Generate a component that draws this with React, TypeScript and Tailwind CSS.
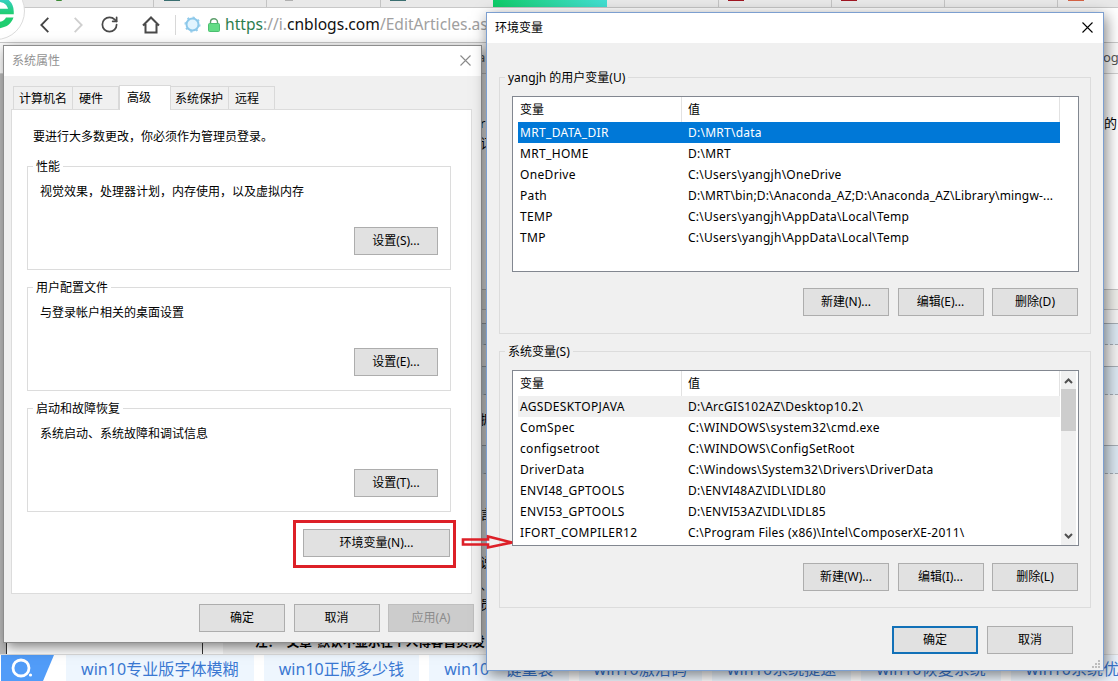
import { RotateCw } from "lucide-react"
import { clsx } from "clsx"
import type { ReactNode } from "react"

type Variable = { name: string; value: string }

const USER_VARS: Variable[] = [
  { name: "MRT_DATA_DIR", value: "D:\\MRT\\data" },
  { name: "MRT_HOME", value: "D:\\MRT" },
  { name: "OneDrive", value: "C:\\Users\\yangjh\\OneDrive" },
  { name: "Path", value: "D:\\MRT\\bin;D:\\Anaconda_AZ;D:\\Anaconda_AZ\\Library\\mingw-..." },
  { name: "TEMP", value: "C:\\Users\\yangjh\\AppData\\Local\\Temp" },
  { name: "TMP", value: "C:\\Users\\yangjh\\AppData\\Local\\Temp" },
]

const SYSTEM_VARS: Variable[] = [
  { name: "AGSDESKTOPJAVA", value: "D:\\ArcGIS102AZ\\Desktop10.2\\" },
  { name: "ComSpec", value: "C:\\WINDOWS\\system32\\cmd.exe" },
  { name: "configsetroot", value: "C:\\WINDOWS\\ConfigSetRoot" },
  { name: "DriverData", value: "C:\\Windows\\System32\\Drivers\\DriverData" },
  { name: "ENVI48_GPTOOLS", value: "D:\\ENVI48AZ\\IDL\\IDL80" },
  { name: "ENVI53_GPTOOLS", value: "D:\\ENVI53AZ\\IDL\\IDL85" },
  { name: "IFORT_COMPILER12", value: "C:\\Program Files (x86)\\Intel\\ComposerXE-2011\\" },
]

const SUGGESTIONS = [
  "win10专业版字体模糊",
  "win10正版多少钱",
  "win10一键重装",
  "win10激活码",
  "win10系统提速",
  "win10恢复系统",
  "win10系统优化",
]

type ButtonProps = {
  children: ReactNode
  className?: string
  variant?: "normal" | "default" | "disabled"
}

function Button({ children, className, variant = "normal" }: ButtonProps) {
  return (
    <button
      className={clsx(
        "flex h-7 shrink-0 items-center justify-center whitespace-nowrap",
        variant === "normal" && "border border-[#adadad] bg-[#e1e1e1]",
        variant === "default" && "border-2 border-[#1271b8] bg-[#e1e1e1]",
        variant === "disabled" && "border border-[#bfbfbf] bg-[#cccccc] text-[#8b8b8b]",
        className ?? "w-[86px]"
      )}
    >
      {children}
    </button>
  )
}

function CloseIcon({ className }: { className: string }) {
  return (
    <svg className={className} width="11" height="11" viewBox="0 0 11 11" fill="none" stroke="currentColor">
      <path d="M0.5 0.5L10.5 10.5M10.5 0.5L0.5 10.5" strokeWidth="1.1" />
    </svg>
  )
}

/* Browser behind the dialogs */

function Browser() {
  const band = "border-t border-b border-t-[#a5adb4] border-b-[#a5adb4] bg-[#dce8f2] [border-bottom-style:dashed]"
  return (
    <div className="flex h-full flex-col bg-white">
      <div className="flex h-2 shrink-0 border-b border-[#c8c8c8] bg-[#e9e9e9]">
        <div className="flex w-[154px] border-r border-[#c4c4c4] pl-[56px]">
          <span className="h-px w-1.5 rounded-b bg-[#3b8a35]" />
        </div>
        <div className="flex w-[113px] border-r border-[#c4c4c4] pl-2.5">
          <span className="h-px w-4 bg-[#3a6e70]" />
        </div>
        <div className="flex w-[114px] border-r border-[#c4c4c4] pl-[18px]">
          <span className="h-px w-2 bg-[#b0b0b0]" />
        </div>
        <div className="flex w-[112px] pl-[9px]">
          <span className="h-px w-4 bg-[#3a6e70]" />
        </div>
        <div className="w-[114px] bg-gradient-to-r from-[#0ccd68] to-[#43dfd3]" />
        <div className="w-[112px] border-r border-[#c4c4c4]" />
        <div className="flex w-[113px] border-r border-[#c4c4c4] pl-[9px]">
          <span className="h-px w-4 bg-[#a01622]" />
        </div>
        <div className="flex w-[113px] border-r border-[#c4c4c4] pl-[9px]">
          <span className="h-px w-4 bg-[#a01622]" />
        </div>
        <div className="flex w-[113px] border-r border-[#c4c4c4]" />
        <div className="flex flex-1 pl-2.5">
          <span className="h-px w-4 bg-[#d46245]" />
        </div>
      </div>

      <div className="flex h-[35px] shrink-0 items-center border-b border-[#c9c9c9] pb-px pl-[40px]">
        <svg width="9" height="16" viewBox="0 0 9 16" fill="none" stroke="#444" strokeWidth="1.8">
          <path d="M8.3 0.8L1.3 8L8.3 15.2" />
        </svg>
        <svg className="ml-[25px]" width="9" height="16" viewBox="0 0 9 16" fill="none" stroke="#cfcfcf" strokeWidth="1.8">
          <path d="M0.7 0.8L7.7 8L0.7 15.2" />
        </svg>
        <RotateCw className="ml-[17px] h-[19px] w-[19px] text-[#4a4a4a]" strokeWidth={2.2} />
        <svg className="ml-[23px]" width="18" height="18" viewBox="0 0 18 18" fill="none" stroke="#4a4a4a" strokeWidth="2">
          <path d="M1 9.5L9 1.5L17 9.5M3.5 8V16.5H14.5V8" />
        </svg>
        <span className="ml-[15px] h-5 w-px bg-[#d8d8d8]" />
        <svg className="ml-[8px]" width="17" height="17" viewBox="0 0 17 17" fill="none">
          <circle cx="8.5" cy="8.5" r="6" fill="#e2f4fe" stroke="#8cc8ea" strokeWidth="2" />
          <circle cx="8.5" cy="8.5" r="7.4" stroke="#8cc8ea" strokeWidth="1.2" strokeDasharray="2.2 3.6" />
        </svg>
        <svg className="ml-[7px]" width="12" height="14" viewBox="0 0 12 14" fill="none">
          <path d="M2.5 6V4a3.5 3.2 0 0 1 7 0v2" stroke="#5d9f6c" strokeWidth="1.4" />
          <rect x="0.5" y="5.5" width="11" height="8" rx="1" fill="#62dc85" stroke="#4cbf71" />
        </svg>
        <div className="ml-[5px] text-[15.6px] whitespace-nowrap text-[#a0a0a0]">
          <span className="text-[#2c7d4e]">https</span>
          ://i.<span className="text-[#111]">cnblogs.com</span>/EditArticles.as
        </div>
      </div>

      <div className="flex h-[31px] shrink-0 items-center justify-between border-b border-[#cfcfcf] bg-[#fafafa] text-[13px] text-[#555]">
        <span className="pl-[478px]">a</span>
        <span className="w-[15px]">og</span>
      </div>

      <div className="flex min-h-0 flex-1">
        <div className="w-[7px] border-r border-[#333] bg-[#b9b9b9]" />
        <div className="w-[196px] border-r border-[#333] bg-white" />
        <div className="w-5 bg-white" />
        <div className="flex flex-1 flex-col overflow-hidden bg-[#f2f2f2]">
          <div className="flex h-[215px] shrink-0 items-start justify-between bg-white pt-[39px] text-[13px] leading-5 text-black">
            <span className="pl-[257px]">
              r<br />订
            </span>
            <span className="w-[14px]">的</span>
          </div>
          <div className="h-[21px] shrink-0 border-y border-[#c4c4c4] bg-[#eeeeea]" />
          <div className="h-[13px] shrink-0 bg-[#f4f4f4]" />
          <div className={clsx(band, "h-[22px] shrink-0")} />
          <div className="h-[21px] shrink-0" />
          <div className={clsx(band, "h-[29px] shrink-0")} />
          <div className="flex h-[50px] shrink-0 items-center pl-[257px] text-[13px]">据</div>
          <div className={clsx(band, "h-[29px] shrink-0")} />
          <div className="flex h-[154px] shrink-0 flex-col pt-[30px] pl-[257px] text-[13px] leading-[20px]">
            <span>言</span>
            <span className="mt-[28px]">说</span>
            <span className="mt-[2px]">、</span>
            <span>员</span>
          </div>
          <div className="h-[26px] shrink-0 pt-px pl-[32px] text-[12.6px] leading-[26px] font-bold whitespace-nowrap text-black">
            注：&nbsp; 文章“默认不显示在个人博客首页,发
          </div>
        </div>
      </div>

      <div className="flex h-[27px] shrink-0 gap-2.5 overflow-hidden border-t border-[#dcdcdc] bg-white">
        <svg className="-mr-[2px] ml-px shrink-0" width="57" height="26" viewBox="0 0 57 26">
          <path d="M0 0H53L42 26H0Z" fill="#519cf8" />
          <circle cx="20" cy="13" r="8" fill="none" stroke="#fff" strokeWidth="2.8" />
          <circle cx="29.5" cy="20" r="1.6" fill="#fff" />
        </svg>
        {SUGGESTIONS.map((text) => (
          <span
            key={text}
            className="flex h-[26px] shrink-0 items-center bg-[#eef6fe] px-[15px] pt-0.5 text-[16px] tracking-[0.06px] whitespace-nowrap text-[#3a78d2]"
          >
            {text}
          </span>
        ))}
      </div>
    </div>
  )
}

/* System properties */

function Section({ title, text, button }: { title: string; text: string; button: string }) {
  return (
    <fieldset className="h-[112px] w-[424px] border border-[#dcdcdc]">
      <legend className="ml-[5px] h-[17px] px-[3px] pt-px leading-4">{title}</legend>
      <p className="pt-[9px] pl-3 leading-4">{text}</p>
      <div className="mt-[27px] flex justify-end pr-3">
        <Button className="w-[84px]">{button}</Button>
      </div>
    </fieldset>
  )
}

function SystemProperties() {
  const tab = "flex h-[23px] items-center border-t border-r border-[#d9d9d9] bg-[#f0f0f0] pt-0.5"
  return (
    <div className="absolute top-[45px] left-[3px] flex h-[598px] w-[479px] flex-col border border-[#8d8d8d] bg-[#f0f0f0] text-black shadow-[3px_4px_12px_rgba(0,0,0,0.5)]">
      <div className="flex h-[30px] shrink-0 items-center justify-between bg-white pr-[10px] pl-2 text-[#929292]">
        <span>系统属性</span>
        <CloseIcon className="-mt-px text-[#8a8a8a]" />
      </div>
      <div className="mt-[9px] ml-[9px] flex h-[24px] items-end">
        <div className={clsx(tab, "w-[60px] border-l pl-[5px]")}>计算机名</div>
        <div className={clsx(tab, "w-[46px] pl-[6px]")}>硬件</div>
        <div className="z-10 -mb-px flex h-[25px] w-[52px] items-center border-x border-t border-[#d9d9d9] bg-white pb-px pl-[7px]">
          高级
        </div>
        <div className={clsx(tab, "w-[58px] pl-[4px]")}>系统保护</div>
        <div className={clsx(tab, "w-[46px] pl-[6px]")}>远程</div>
      </div>
      <div className="ml-[7px] flex h-[485px] w-[461px] flex-col border border-[#dcdcdc] bg-white">
        <p className="pt-[19px] pl-[21px] leading-4">要进行大多数更改，你必须作为管理员登录。</p>
        <div className="mt-[13px] ml-[15px] flex flex-col gap-[9px]">
          <Section title="性能" text="视觉效果，处理器计划，内存使用，以及虚拟内存" button="设置(S)..." />
          <Section title="用户配置文件" text="与登录帐户相关的桌面设置" button="设置(E)..." />
          <Section title="启动和故障恢复" text="系统启动、系统故障和调试信息" button="设置(T)..." />
        </div>
        <div className="mt-2 ml-[281px] h-12 w-[163px] border-[3px] border-[#dd2028] px-[7px] py-[6px]">
          <Button className="w-[147px]">环境变量(N)...</Button>
        </div>
      </div>
      <div className="mt-[10px] flex justify-end gap-[8.5px] pr-[7px]">
        <Button>确定</Button>
        <Button>取消</Button>
        <Button variant="disabled">应用(A)</Button>
      </div>
    </div>
  )
}

/* Environment variables */

function ScrollBar() {
  return (
    <div className="mr-[2px] flex w-[15px] flex-col items-center bg-[#f0f0f0] pt-[7px] pb-[6px]">
      <svg width="9" height="6" viewBox="0 0 9 6" fill="none" stroke="#505050" strokeWidth="2">
        <path d="M1 5L4.5 1.5L8 5" />
      </svg>
      <span className="mt-[5px] h-[42px] w-[15px] bg-[#cdcdcd]" />
      <svg className="mt-auto" width="9" height="6" viewBox="0 0 9 6" fill="none" stroke="#505050" strokeWidth="2">
        <path d="M1 1L4.5 4.5L8 1" />
      </svg>
    </div>
  )
}

type VariableGroupProps = {
  title: string
  rows: Variable[]
  buttons: string[]
  selectedClass: string
  buttonsClass: string
  scroll?: boolean
}

function VariableGroup({ title, rows, buttons, selectedClass, buttonsClass, scroll }: VariableGroupProps) {
  return (
    <fieldset className="h-[265px] w-[592px] border border-[#dcdcdc]">
      <legend className="ml-[5px] h-4 px-[3px] leading-[17px]">{title}</legend>
      <div className="mt-[11px] ml-3 flex h-[176px] w-[567px] justify-between border border-[#828790] bg-white">
        <div className="w-[547px] pl-[5px]">
          <div className="flex h-[25px] items-center border-r border-[#e2e2e2]">
            <span className="flex h-full w-[164px] items-center border-r border-[#e2e2e2] pl-[2px]">变量</span>
            <span className="pl-[6px]">值</span>
          </div>
          {rows.map((row, i) => (
            <div key={row.name} className={clsx("flex h-[21px] items-center whitespace-nowrap", i === 0 && selectedClass)}>
              <span className="w-[170px] pl-[2px] tracking-[0.33px]">{row.name}</span>
              <span className={row.name === "Path" ? "tracking-[0.16px]" : "tracking-[0.25px]"}>{row.value}</span>
            </div>
          ))}
        </div>
        {scroll && <ScrollBar />}
      </div>
      <div className={clsx("flex justify-end gap-[8.5px] pr-3", buttonsClass)}>
        {buttons.map((label) => (
          <Button key={label}>{label}</Button>
        ))}
      </div>
    </fieldset>
  )
}

function EnvironmentVariables() {
  return (
    <div className="absolute top-[12px] left-[486px] flex h-[659px] w-[618px] flex-col border border-[#7c9fd0] bg-[#f0f0f0] text-black shadow-[2px_4px_14px_rgba(0,0,0,0.5)]">
      <div className="flex h-[30px] shrink-0 items-center justify-between bg-white pr-[10px] pl-2">
        <span>环境变量</span>
        <CloseIcon className="-mt-px text-black" />
      </div>
      <div className="mt-[26px] ml-[12px] flex flex-col gap-[9px]">
        <VariableGroup
          title="yangjh 的用户变量(U)"
          rows={USER_VARS}
          buttons={["新建(N)...", "编辑(E)...", "删除(D)"]}
          selectedClass="bg-[#0078d7] text-white"
          buttonsClass="mt-4"
        />
        <VariableGroup
          title="系统变量(S)"
          rows={SYSTEM_VARS}
          buttons={["新建(W)...", "编辑(I)...", "删除(L)"]}
          selectedClass="bg-[#f0f0f0]"
          buttonsClass="mt-[17px]"
          scroll
        />
      </div>
      <div className="mt-[18px] flex justify-end gap-[9px] pr-[30px]">
        <Button variant="default">确定</Button>
        <Button>取消</Button>
      </div>
      <svg className="absolute right-[3px] bottom-[2px]" width="8" height="8" viewBox="0 0 8 8" fill="#bdbdbd">
        <path d="M6 0h2v2H6zM3 3h2v2H3zM6 3h2v2H6zM0 6h2v2H0zM3 6h2v2H3zM6 6h2v2H6z" />
      </svg>
    </div>
  )
}

export default function App() {
  return (
    <div className="relative h-[681px] w-[1118px] overflow-hidden font-['Noto_Sans','Noto_Sans_CJK_SC',sans-serif] text-[12px]">
      <Browser />
      {/* Browser logo, cut off by the corner */}
      <svg className="absolute top-0 left-0" width="26" height="42" viewBox="0 0 26 42" fill="none">
        <defs>
          <linearGradient id="logo" x1="0" y1="0" x2="0" y2="28" gradientUnits="userSpaceOnUse">
            <stop offset="0" stopColor="#35cfc0" />
            <stop offset="0.5" stopColor="#1fce70" />
          </linearGradient>
        </defs>
        <circle cx="-4" cy="11" r="28.5" fill="#fff" stroke="#dcdcdc" />
        <path d="M-12 11.5H11C11 4 6 -1 -3 -1" stroke="url(#logo)" strokeWidth="5.5" />
        <path d="M13.5 17.5C11 24.5 6 27.8 -3 28.5V22C2 22 4.5 20.5 6 17.5Z" fill="url(#logo)" />
      </svg>
      <SystemProperties />
      <EnvironmentVariables />
      {/* Arrow from the highlighted button to the second dialog */}
      <svg className="absolute top-[533px] left-[461px]" width="56" height="19" viewBox="0 0 56 19" fill="none">
        <path d="M2 6.5H27V3.5L51 9.5L27 14.5V11.5H2Z" stroke="#dd2028" strokeWidth="2.6" />
      </svg>
    </div>
  )
}
